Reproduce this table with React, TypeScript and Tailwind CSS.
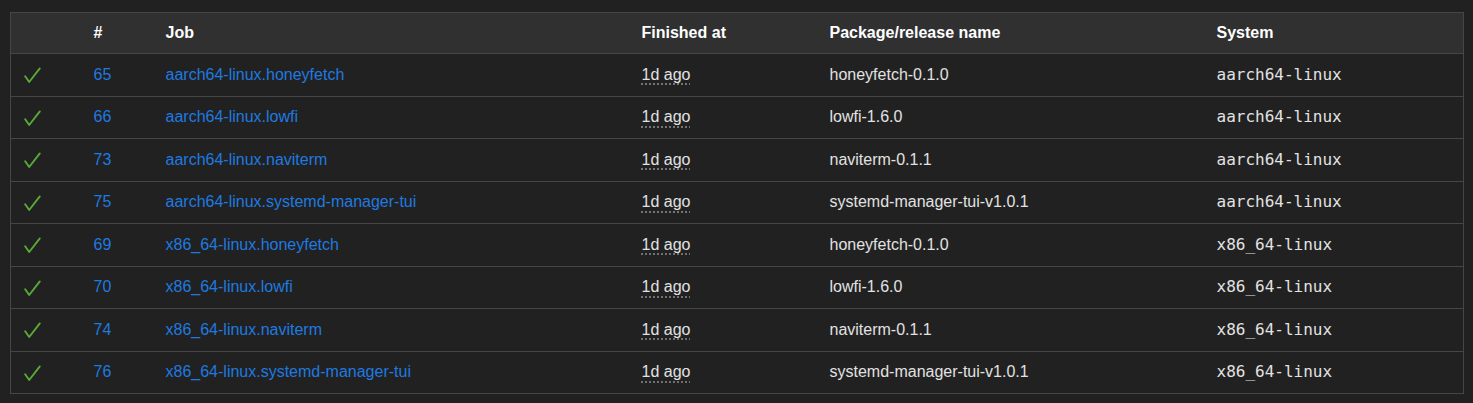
import React from "react";

const rows = [
  { id: 65, job: "aarch64-linux.honeyfetch", pkg: "honeyfetch-0.1.0", sys: "aarch64-linux" },
  { id: 66, job: "aarch64-linux.lowfi", pkg: "lowfi-1.6.0", sys: "aarch64-linux" },
  { id: 73, job: "aarch64-linux.naviterm", pkg: "naviterm-0.1.1", sys: "aarch64-linux" },
  { id: 75, job: "aarch64-linux.systemd-manager-tui", pkg: "systemd-manager-tui-v1.0.1", sys: "aarch64-linux" },
  { id: 69, job: "x86_64-linux.honeyfetch", pkg: "honeyfetch-0.1.0", sys: "x86_64-linux" },
  { id: 70, job: "x86_64-linux.lowfi", pkg: "lowfi-1.6.0", sys: "x86_64-linux" },
  { id: 74, job: "x86_64-linux.naviterm", pkg: "naviterm-0.1.1", sys: "x86_64-linux" },
  { id: 76, job: "x86_64-linux.systemd-manager-tui", pkg: "systemd-manager-tui-v1.0.1", sys: "x86_64-linux" },
];

function Check() {
  return (
    <svg width="17" height="17" viewBox="0 0 17 17" className="block">
      <path
        d="M1.2 9.2 L5.2 15 L15.8 1.4"
        fill="none"
        stroke="#5aaa35"
        strokeWidth="1.9"
        strokeLinecap="round"
        strokeLinejoin="round"
      />
    </svg>
  );
}

export default function App() {
  return (
    <div
      className="w-[1473px] h-[403px] bg-[#212121] text-[#e2e2e2] text-[16px] pt-[12px] pl-[10px]"
      style={{ fontFamily: '"Liberation Sans", Arial, sans-serif' }}
    >
      <table className="w-[1453px] border-collapse border border-[#464646] table-fixed">
        <colgroup>
          <col className="w-[71px]" />
          <col className="w-[72px]" />
          <col className="w-[476px]" />
          <col className="w-[188px]" />
          <col className="w-[387px]" />
          <col className="w-[259px]" />
        </colgroup>
        <thead>
          <tr className="bg-[#303030] h-[41px] text-white">
            <th className="px-3 text-left font-bold"></th>
            <th className="px-3 text-left font-bold">#</th>
            <th className="px-3 text-left font-bold">Job</th>
            <th className="px-3 text-left font-bold">Finished at</th>
            <th className="px-3 text-left font-bold">Package/release name</th>
            <th className="px-3 text-left font-bold">System</th>
          </tr>
        </thead>
        <tbody>
          {rows.map((r) => (
            <tr key={r.id} className="h-[42.5px] border-t border-[#464646]">
              <td className="pl-[13px] pr-3 pt-[2px]">
                <Check />
              </td>
              <td className="px-3">
                <a className="text-[#1f7ae0]">{r.id}</a>
              </td>
              <td className="px-3">
                <a className="text-[#1f7ae0]">{r.job}</a>
              </td>
              <td className="px-3">
                <span className="underline decoration-dotted decoration-[#8a8a8a] underline-offset-[4px]">1d ago</span>
              </td>
              <td className="px-3">{r.pkg}</td>
              <td className="px-3" style={{ fontFamily: '"DejaVu Sans Mono", monospace' }}>
                {r.sys}
              </td>
            </tr>
          ))}
        </tbody>
      </table>
    </div>
  );
}
